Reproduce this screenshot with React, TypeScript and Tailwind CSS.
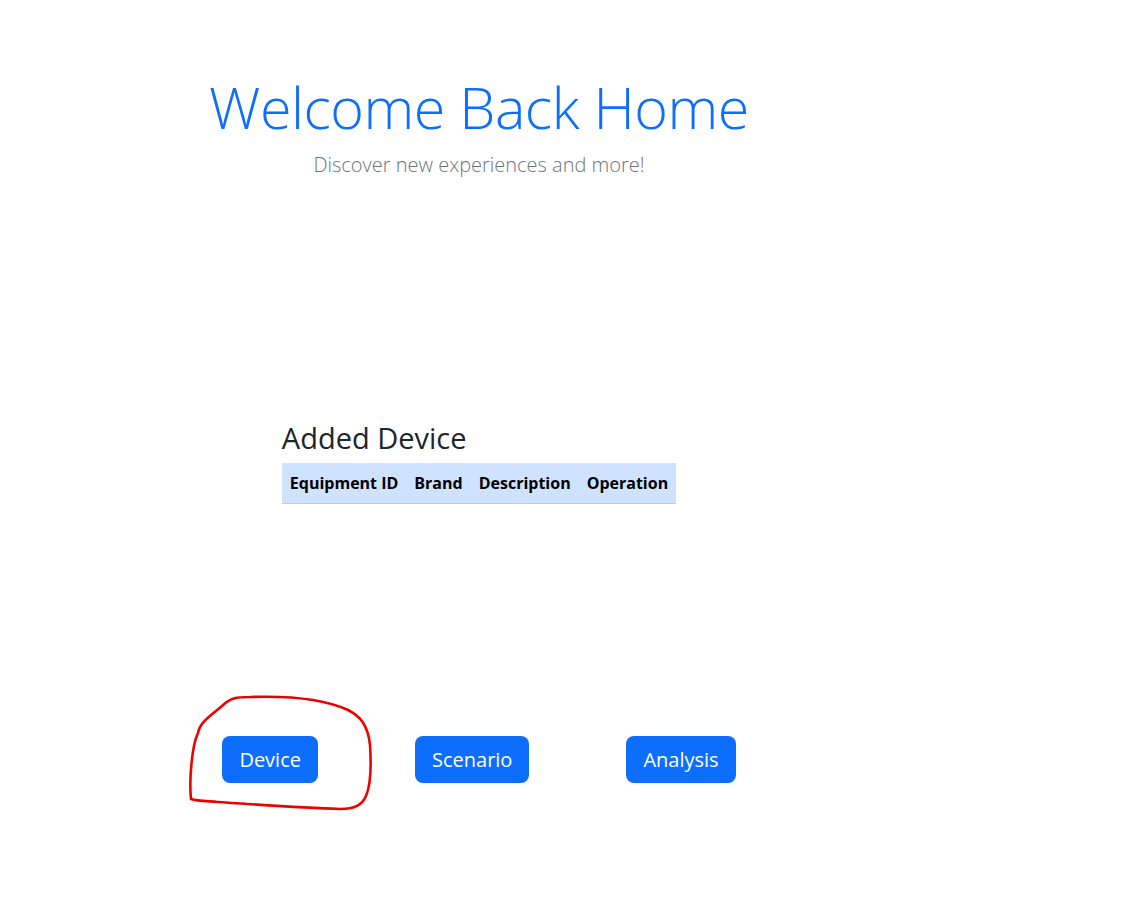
import React from "react";

export default function App() {
  return (
    <div
      className="relative min-h-[922px] w-[1133px] bg-white text-[#212529]"
      style={{ fontFamily: '"Open Sans", "Noto Sans", sans-serif' }}
    >
      <div className="flex w-[958px] flex-col items-center pt-[73px]">
        <h1 className="text-[57.5px] font-light leading-[1.2] text-[#0d6efd] tracking-[-0.5px]">
          Welcome Back Home
        </h1>
        <p className="mt-[8px] text-[20px] font-light leading-[1.5] text-[#6c757d]">
          Discover new experiences and more!
        </p>

        <div className="mt-[241px] flex flex-col items-start">
          <h3 className="mb-[7px] text-[29px] font-normal leading-[1.2]">Added Device</h3>
          <table className="border-collapse">
            <thead>
              <tr className="border-b border-[#bacbe6] bg-[#cfe2ff] text-[16px] font-bold text-black">
                <th className="px-[8px] py-[8px] text-left leading-[24px]">Equipment ID</th>
                <th className="px-[8px] py-[8px] text-left leading-[24px]">Brand</th>
                <th className="px-[8px] py-[8px] text-left leading-[24px]">Description</th>
                <th className="px-[8px] py-[8px] text-left leading-[24px]">Operation</th>
              </tr>
            </thead>
          </table>
        </div>

        <div className="mt-[232px] flex gap-[97px]">
          <button className="rounded-[8px] bg-[#0d6efd] px-[17px] py-[8px] text-[20px] leading-[31px] text-white">
            Device
          </button>
          <button className="rounded-[8px] bg-[#0d6efd] px-[17px] py-[8px] text-[20px] leading-[31px] text-white">
            Scenario
          </button>
          <button className="rounded-[8px] bg-[#0d6efd] px-[17px] py-[8px] text-[20px] leading-[31px] text-white">
            Analysis
          </button>
        </div>
      </div>

      <svg
        className="pointer-events-none absolute left-0 top-0"
        width="1133"
        height="922"
        viewBox="0 0 1133 922"
      >
        <path
          d="M191 799 C189 780 192 745 198 733 C200 722 210 716 222 706 C230 698 236 697 250 697 C280 696 320 697 348 710 C360 716 368 725 370 745 C371 760 372 782 366 796 C362 805 355 809 340 809 C300 808 250 804 218 802 C205 801 197 801 191 799"
          fill="none"
          stroke="#ee0000"
          strokeWidth="2.6"
          strokeLinecap="round"
          strokeLinejoin="round"
        />
      </svg>
    </div>
  );
}
